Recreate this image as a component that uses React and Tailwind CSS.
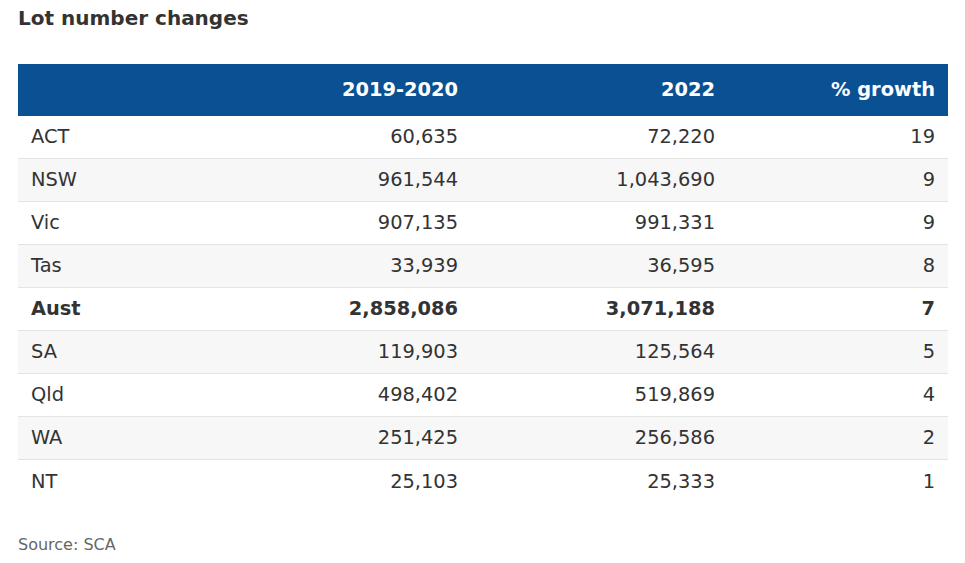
import React from 'react';

const rows = [
  { state: 'ACT', a: '60,635', b: '72,220', g: '19' },
  { state: 'NSW', a: '961,544', b: '1,043,690', g: '9' },
  { state: 'Vic', a: '907,135', b: '991,331', g: '9' },
  { state: 'Tas', a: '33,939', b: '36,595', g: '8' },
  { state: 'Aust', a: '2,858,086', b: '3,071,188', g: '7', bold: true },
  { state: 'SA', a: '119,903', b: '125,564', g: '5' },
  { state: 'Qld', a: '498,402', b: '519,869', g: '4' },
  { state: 'WA', a: '251,425', b: '256,586', g: '2' },
  { state: 'NT', a: '25,103', b: '25,333', g: '1' },
];

const App = () => {
  return (
    <div className="min-h-screen bg-white pl-[18px] pr-[17px] font-['DejaVu_Sans',sans-serif] text-[#333333]">
      {/* Title */}
      <h2 className="mt-[6px] text-[20px] font-bold leading-[24px] text-[#333333]">
        Lot number changes
      </h2>

      {/* Table */}
      <div className="mt-[34px] text-[19.4px]">
        <div className="grid h-[52px] grid-cols-[200px_227px_257px_220px] items-center bg-[#0a5194] px-[13px] font-bold text-white">
          <div></div>
          <div className="text-right">2019-2020</div>
          <div className="text-right">2022</div>
          <div className="text-right">% growth</div>
        </div>

        {rows.map((r, i) => (
          <div
            key={r.state}
            className={`grid h-[43px] grid-cols-[200px_227px_257px_220px] items-center px-[13px] ${
              i % 2 === 1 ? 'bg-[#f7f7f7]' : 'bg-white'
            } ${i < rows.length - 1 ? 'border-b border-[#e4e4e4]' : ''} ${
              r.bold ? 'font-bold' : ''
            }`}
          >
            <div>{r.state}</div>
            <div className="text-right">{r.a}</div>
            <div className="text-right">{r.b}</div>
            <div className="text-right">{r.g}</div>
          </div>
        ))}
      </div>

      {/* Source */}
      <p className="mt-[32px] text-[16px] leading-[20px] text-[#666666]">Source: SCA</p>
    </div>
  );
};

export default App;
